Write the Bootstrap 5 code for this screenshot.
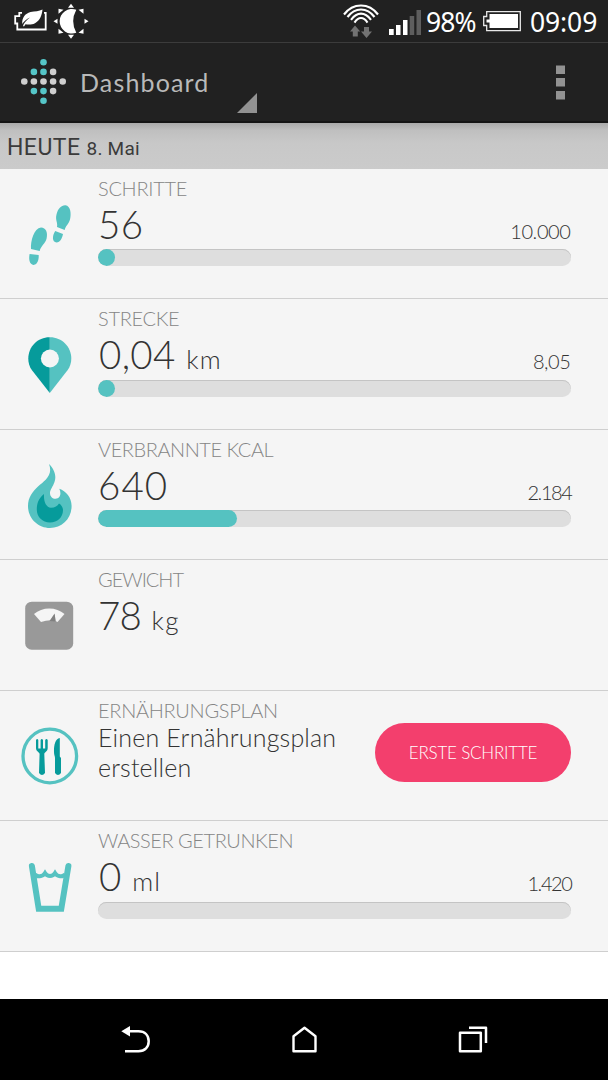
<!DOCTYPE html>
<html lang="de">
<head>
<meta charset="utf-8">
<meta name="viewport" content="width=device-width, initial-scale=1">
<title>Dashboard</title>
<link href="https://cdn.jsdelivr.net/npm/bootstrap@5.3.0/dist/css/bootstrap.min.css" rel="stylesheet">
<style>
body{width:608px;height:1080px;overflow:hidden;background:#fff;color:#333;font-family:Lato,sans-serif;font-weight:300;line-height:1}
svg{display:block;flex:none}
.statusbar{height:43px;background:#212121;border-bottom:1px solid #3c3c3c;color:#fff;font:400 26.5px/45px "Noto Sans",sans-serif;padding-left:12px}
.statusbar .level{width:50px;margin-left:2px;letter-spacing:-.9px}
.statusbar .clock{width:78px;margin-left:7px;letter-spacing:-.1px}
.appbar{height:80px;background:#212121;border-bottom:2px solid #151515;padding-left:20px;padding-right:43px}
.appbar h1{font-size:25px;font-weight:400;line-height:30px;color:#b9b9b9;letter-spacing:1.15px;margin:0 0 0 13px}
.spinner-mark{margin:42px 0 0 27.5px}
.daybar{height:45.5px;background:linear-gradient(#aaa,#bfbfbf 7px,#c8c8c8 20px,#cbcbcb);font:400 23px/49px Roboto,sans-serif;padding-left:7px;color:#3b3b3b;letter-spacing:.45px}
.daybar small{font-size:19px;letter-spacing:.2px}
.tile{height:130.5px;background:#f5f5f5;border-bottom:1px solid #cfcfcf;padding-right:37px}
.tile-icon{width:98px;height:130px}
.tile-label{font-size:20px;line-height:24px;margin-top:7.4px;color:#858585;letter-spacing:-.3px;white-space:nowrap}
.tile-label.snug{letter-spacing:-.45px}
.tile-label.tight{letter-spacing:-1px}
.tile-values{height:49.6px}
.tile-num{font-size:38.5px;line-height:48px;letter-spacing:.3px}
.tile-num.wide{letter-spacing:1.1px}
.tile-num.narrow{letter-spacing:-.8px}
.tile-num.inset{margin-left:1px}
.tile-unit{font-size:26px;margin-left:10.5px;letter-spacing:1.2px}
.tile-goal{font-size:20px;letter-spacing:-.4px;margin-right:.5px}
.tile-goal.narrow{letter-spacing:-1.4px;margin-right:-.5px}
.tile-text{font-size:25px;line-height:30.5px;letter-spacing:.18px}
.meter{--bs-progress-height:17px;border-radius:9px;background:#dedede;box-shadow:inset 0 1px 0 #c4c4c4}
.meter .progress-bar{background:#55c2c1;border-radius:9px;min-width:17px}
.btn-start{width:196px;height:59px;background:#f33f6d;color:#fff;font-size:17px;font-weight:300;letter-spacing:-.2px;margin-top:32.4px;padding:0}
.navkeys{height:81px;background:#000}
</style>
</head>
<body class="d-flex flex-column">

<header class="statusbar d-flex">
  <svg width="36" height="43"><path d="M10 12.800H7.300V16.200H3.200V23.500H5.300V29.500H33.700V12.800H32" fill="none" stroke="#fff" stroke-width="1.800"/><path d="M11 26C11.500 23.500 14 20.500 18 17.500C14.500 19 11.500 21.500 10.300 24C9.700 18 13 13.500 18.500 12C23 11 27 11.500 30.500 9.500C30 15 28 20.500 23 23.200C19 25.200 15.500 24.300 13.500 24.200L12 26.500Z" fill="#fff"/></svg>
  <svg width="40" height="43" style="margin-left:3px"><g transform="translate(20 21.300)" fill="#fff"><path d="M5.300-11.500A12.300 12.300 0 1 0 5.300 11.500A24 24 0 0 1 5.300-11.500Z"/><path d="M-3-13.500L0-17.500L3-13.500Z"/><path d="M-3 13.500L0 17.500L3 13.500Z"/><path d="M-13.500-2.500V2.500L-17.500 0Z"/><path d="M13.500-2.500V2.500L17.500 0Z"/><path d="M-12.500-7.500L-12.500-12.500L-7.500-11.500Z"/><path d="M12.500-7.500L12.500-12.500L7.500-11.500Z"/><path d="M-12.500 7.500L-12.500 12.500L-7.500 11.500Z"/><path d="M12.500 7.500L12.500 12.500L7.500 11.500Z"/></g></svg>
  <svg class="ms-auto" width="38" height="43"><g fill="none" stroke="#fff" stroke-width="2.100"><path d="M2 14.500C11 2.500 27 2.500 36 14.500"/><path d="M5.500 17C13 7 25 7 32.500 17"/><path d="M9 19.800C15 11.600 23 11.600 29 19.800"/><path d="M12.500 22.600C16.500 16.500 21.500 16.500 25.500 22.600"/></g><g fill="#727272"><path d="M13 25.500L18.200 31.500H15.800V36.500H10.800V31.500H8Z"/><path d="M24.500 38L19 31.500H22V27H27V31.500H30Z"/></g></svg>
  <svg width="36" height="43" style="margin-left:9px;margin-right:-1px"><path d="M0 29H4.700V35H0ZM7 25H11.500V35H7ZM14 20H18.500V35H14Z" fill="#fff"/><path d="M20.700 16H25.200V35H20.700ZM27.500 10H32V35H27.500Z" fill="#5e5e5e"/></svg>
  <span class="level">98%</span>
  <svg width="40" height="43" style="margin-left:7px"><path d="M3.700 11.700H37.300V30.600H3.700V25.500H.7V16.500H3.700Z" fill="none" stroke="#e8e8e8" stroke-width="1.300"/><path d="M6.500 14H35V28H6.500V22.500H3.500V19.500H6.500Z" fill="#fff"/></svg>
  <span class="clock">09:09</span>
</header>

<nav class="appbar d-flex align-items-center">
  <svg width="47" height="47" viewBox="-23.500 -23.500 47 47" style="margin-top:-1px"><g fill="#55c6c8"><circle cy="-19.200" r="3.300"/><circle cx="-9.600" cy="-9.600" r="3.300"/><circle cy="-9.600" r="3.300"/><circle cx="-9.600" cy="9.600" r="3.300"/><circle cy="9.600" r="3.300"/><circle cy="19.200" r="3.300"/></g><g fill="#cfcfcf"><circle cx="9.600" cy="-9.600" r="3.300"/><circle cx="-19.200" r="3.300"/><circle cx="-9.600" r="3.300"/><circle r="3.300"/><circle cx="9.600" r="3.300"/><circle cx="19.200" r="3.300"/><circle cx="9.600" cy="9.600" r="3.300"/></g></svg>
  <h1>Dashboard</h1>
  <svg class="spinner-mark" width="20" height="20"><path d="M20 0V20H0Z" fill="#929292"/></svg>
  <svg class="ms-auto" width="9" height="36"><path d="M0 1.500H9V10H0ZM0 14H9V22.500H0ZM0 27H9V35.500H0Z" fill="#929292"/></svg>
</nav>

<div class="daybar">HEUTE <small>8. Mai</small></div>

<main>
  <section class="tile d-flex">
    <svg class="tile-icon" viewBox="0 168.500 98 130"><g fill="#55c2c1"><path d="M31 248.500C30.500 240 34 228 41 227C46 227 48 232 46.600 238C45.500 243 41 245 39.700 250.500Z"/><path d="M29.600 253.600L38.700 254.600C39 259 37.500 264.500 33.500 264.400C29.500 264.200 28.500 259 29.600 253.600Z"/><path d="M57 226.500C58 222 55 219.500 56.500 214C58 208 61.500 204.500 65.500 204.800C70.500 205.500 71.500 213 70 219C68.800 223.500 65.500 225.500 64.700 229.500Z"/><path d="M55.200 230.500L63 233.500C62 238 60 242 56.500 242C52 241.500 52 235.500 55.200 230.500Z"/></g></svg>
    <div class="flex-grow-1">
      <div class="tile-label">SCHRITTE</div>
      <div class="tile-values d-flex justify-content-between align-items-baseline"><span class="tile-num">56</span><span class="tile-goal">10.000</span></div>
      <div class="progress meter"><div class="progress-bar" style="width:0.56%"></div></div>
    </div>
  </section>

  <section class="tile d-flex">
    <svg class="tile-icon" viewBox="0 299 98 130"><path d="M49.800 337.200C38 337 28.300 346.500 28.300 358.500C28.300 363 29.500 367 32 370.300L49.800 393Z" fill="#069b9b"/><path d="M49.800 337.200C61.500 337 71.300 346.500 71.300 358.500C71.300 363 70 367 67.500 370.300L49.800 393Z" fill="#55c2c1"/><circle cx="49.900" cy="358.500" r="9" fill="#f5f5f5"/></svg>
    <div class="flex-grow-1">
      <div class="tile-label">STRECKE</div>
      <div class="tile-values d-flex justify-content-between align-items-baseline"><span><span class="tile-num inset">0,04</span><span class="tile-unit">km</span></span><span class="tile-goal">8,05</span></div>
      <div class="progress meter"><div class="progress-bar" style="width:0.5%"></div></div>
    </div>
  </section>

  <section class="tile d-flex">
    <svg class="tile-icon" viewBox="0 429.500 98 130"><path d="M49 463.500C53.500 468 57 474.500 54.500 481.500C53 486 50 489 50 492.500C50 496 52.500 498.300 55.500 498.300C60.500 498 61.500 493 59.300 488.300C66 490.500 71.600 497 71.600 505.500C71.600 518 62 527.500 50 527.500C38 527.500 28 518 28 505.500C28 497 32.500 491 38 486C44 480.500 53.500 475 49 463.500Z" fill="#55c2c1"/><path d="M44 493.500C43.500 501 46 507.200 51 507.300C55 507.300 57.500 505.500 59 503C61 504 63 507 63 509.500C63 517 57.500 522 50 522C42.500 522 36.800 516.500 36.800 509C36.800 502.500 39 497.500 44 493.500Z" fill="#069b9b"/></svg>
    <div class="flex-grow-1">
      <div class="tile-label snug">VERBRANNTE KCAL</div>
      <div class="tile-values d-flex justify-content-between align-items-baseline"><span class="tile-num wide">640</span><span class="tile-goal narrow">2.184</span></div>
      <div class="progress meter"><div class="progress-bar" style="width:29.3%"></div></div>
    </div>
  </section>

  <section class="tile d-flex">
    <svg class="tile-icon" viewBox="0 560 98 130"><rect x="25.200" y="601.700" width="48" height="48" rx="6.500" fill="#999"/><path d="M34 614C42 606.500 56.500 606.500 64.500 614L57.500 622Q56.500 621.500 55.500 621L54.700 614.500L50.500 620.200Q46 620.200 41 622Z" fill="#f5f5f5"/><path d="M49.500 621L54.600 613.500L55.600 621.500Z" fill="#808080"/></svg>
    <div class="flex-grow-1">
      <div class="tile-label tight">GEWICHT</div>
      <div class="tile-values d-flex align-items-baseline"><span class="tile-num narrow">78</span><span class="tile-unit">kg</span></div>
    </div>
  </section>

  <section class="tile d-flex">
    <svg class="tile-icon" viewBox="0 691 98 130"><circle cx="49.800" cy="756" r="26.800" fill="none" stroke="#55c2c1" stroke-width="3.300"/><g fill="#069b9b"><path d="M36 740Q37.200 738 38.300 740V748.500H40.600V740Q41.800 738 43 740V748.500H45.200V740Q46.500 738 47.700 740V748C47.700 751.500 44.500 752 44.300 754L45 773Q42 777 39 773L39.600 754C39.500 752 36 751.500 36 748Z"/><path d="M59.800 738.500V756.500L61 758V773Q58 777 55 773V758C55 756 54 755 54 752C53.800 746 55 738.500 59.800 738Z"/></g></svg>
    <div class="flex-grow-1">
      <div class="tile-label">ERNÄHRUNGSPLAN</div>
      <div class="tile-text">Einen Ernährungsplan<br>erstellen</div>
    </div>
    <button class="btn btn-start rounded-pill" type="button">ERSTE SCHRITTE</button>
  </section>

  <section class="tile d-flex">
    <svg class="tile-icon" viewBox="0 820.500 98 130"><g fill="none" stroke="#55c2c1"><path d="M31.900 865.500L38.700 908.300H61.300L68.400 865.500" stroke-width="6" stroke-linecap="round"/><path d="M35 873.500C37 877 42.500 876.500 45 872.500C47.500 876.500 52.500 876.500 55 872.500C57.500 876.500 63 877 65 873.500" stroke-width="4"/></g></svg>
    <div class="flex-grow-1">
      <div class="tile-label snug">WASSER GETRUNKEN</div>
      <div class="tile-values d-flex justify-content-between align-items-baseline"><span><span class="tile-num inset">0</span><span class="tile-unit">ml</span></span><span class="tile-goal narrow">1.420</span></div>
      <div class="progress meter"></div>
    </div>
  </section>
</main>

<footer class="navkeys mt-auto d-flex justify-content-between align-items-center" style="padding:0 119px 0 120px">
  <svg width="32" height="32" viewBox="120 1024 32 32"><path d="M129 1031.300H138.500C145 1031.300 148.700 1035.500 148.700 1041.300C148.700 1047 145 1051.300 138.500 1051.300H125" fill="none" stroke="#fff" stroke-width="2.500"/><path d="M121.300 1031.300L130 1026V1036.500Z" fill="#fff"/></svg>
  <svg width="28" height="32" viewBox="290.500 1024 28 32"><path d="M293 1051.300V1036.300L304 1027.800L315 1036.300V1051.300Z" fill="none" stroke="#fff" stroke-width="2.400" stroke-linejoin="round"/></svg>
  <svg width="32" height="32" viewBox="457 1024 32 32"><path d="M460 1032.700H480.800V1051.300H460ZM469 1027.800H486V1043" fill="none" stroke="#fff" stroke-width="2.500" stroke-linejoin="round"/></svg>
</footer>
</body>
</html>
